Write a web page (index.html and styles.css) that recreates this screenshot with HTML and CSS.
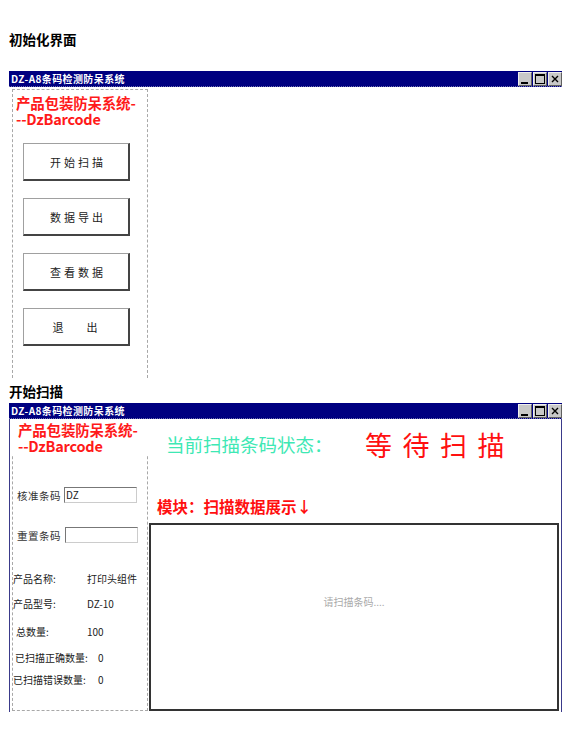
FILE: index.html
```html
<!DOCTYPE html>
<html lang="zh-CN">
<head>
<meta charset="utf-8">
<title>DZ-A8条码检测防呆系统</title>
<link rel="stylesheet" href="styles.css">
</head>
<body>
<div class="page">
  <h2 class="heading h-first">初始化界面</h2>
  <div class="window">
    <div class="titlebar">
      <span class="tb-title">DZ-A8条码检测防呆系统</span>
      <div class="tb-btns">
        <span class="tb-btn"><svg width="12" height="12" viewBox="0 0 12 12"><rect x="2" y="9" width="7" height="2" fill="#000"/></svg></span>
        <span class="tb-btn"><svg width="12" height="12" viewBox="0 0 12 12"><rect x="1.5" y="1.5" width="9" height="9" fill="none" stroke="#000"/><rect x="1" y="1" width="10" height="2" fill="#000"/></svg></span>
        <span class="tb-btn"><svg width="12" height="12" viewBox="0 0 12 12"><path d="M3 3 L9 9 M9 3 L3 9" stroke="#000" stroke-width="1.4"/></svg></span>
      </div>
    </div>
    <div class="body body-one">
      <div class="panel panel-one">
        <div class="brand"><div class="brand-line">产品包装防呆系统-</div><div class="brand-line">--DzBarcode</div></div>
        <div class="menu">
          <button class="menu-btn">开始扫描</button>
          <button class="menu-btn">数据导出</button>
          <button class="menu-btn">查看数据</button>
          <button class="menu-btn wide">退&nbsp;&nbsp;出</button>
        </div>
      </div>
    </div>
  </div>

  <h2 class="heading h-second">开始扫描</h2>
  <div class="window">
    <div class="titlebar">
      <span class="tb-title">DZ-A8条码检测防呆系统</span>
      <div class="tb-btns">
        <span class="tb-btn"><svg width="12" height="12" viewBox="0 0 12 12"><rect x="2" y="9" width="7" height="2" fill="#000"/></svg></span>
        <span class="tb-btn"><svg width="12" height="12" viewBox="0 0 12 12"><rect x="1.5" y="1.5" width="9" height="9" fill="none" stroke="#000"/><rect x="1" y="1" width="10" height="2" fill="#000"/></svg></span>
        <span class="tb-btn"><svg width="12" height="12" viewBox="0 0 12 12"><path d="M3 3 L9 9 M9 3 L3 9" stroke="#000" stroke-width="1.4"/></svg></span>
      </div>
    </div>
    <div class="body body-two">
      <div class="panel panel-two">
        <div class="brand brand-cover"><div class="brand-line">产品包装防呆系统-</div><div class="brand-line">--DzBarcode</div></div>
        <div class="field f1"><span class="f-label">核准条码</span><span class="f-input">DZ</span></div>
        <div class="field f2"><span class="f-label">重置条码</span><span class="f-input"></span></div>
        <div class="info">
          <div class="row r1"><span class="k">产品名称:</span><span class="v">打印头组件</span></div>
          <div class="row r2"><span class="k">产品型号:</span><span class="v">DZ-10</span></div>
          <div class="row r3"><span class="k">总数量:</span><span class="v">100</span></div>
          <div class="row r4"><span class="k">已扫描正确数量:</span><span class="v">0</span></div>
          <div class="row r5"><span class="k">已扫描错误数量:</span><span class="v">0</span></div>
        </div>
      </div>
      <div class="main">
        <div class="status"><span class="status-label">当前扫描条码状态：</span><span class="status-value">等待扫描</span></div>
        <div class="module">模块：扫描数据展示↓</div>
        <div class="display"><span class="placeholder">请扫描条码....</span></div>
      </div>
    </div>
  </div>
</div>
</body>
</html>
```
FILE: styles.css
```css
html, body {
  margin: 0;
  padding: 0;
  background: #fff;
}
body {
  font-family: "Noto Sans CJK SC", "Noto Sans", sans-serif;
  color: #000;
}
.page {
  padding: 0 6px 0 9px;
}
.heading {
  font-size: 13.5px;
  line-height: 16px;
  font-weight: bold;
  margin: 0;
  height: 16px;
}
.h-first {
  padding-top: 31px;
  margin-bottom: 24px;
}
.h-second {
  margin-top: 3px;
  margin-bottom: 4px;
}
.window {
  width: 553px;
}
.titlebar {
  height: 16px;
  background: #000080;
  display: flex;
  align-items: center;
  justify-content: space-between;
  border-bottom: 1px dotted #7070b0;
  box-sizing: border-box;
}
.tb-title {
  color: #fff;
  font-size: 10px;
  font-weight: bold;
  line-height: 14px;
  padding-left: 2px;
  letter-spacing: 0.4px;
}
.tb-btns {
  display: flex;
  gap: 1px;
  align-self: stretch;
  padding-top: 1px;
}
.tb-btn {
  width: 14px;
  height: 14px;
  box-sizing: border-box;
  background: #c8c8c8;
  border-top: 1px solid #eee;
  border-left: 1px solid #eee;
  border-right: 1px solid #606060;
  border-bottom: 1px solid #606060;
  display: flex;
  align-items: center;
  justify-content: center;
}
.body {
  box-sizing: border-box;
}
.body-one {
  height: 291px;
}
.body-two {
  height: 293px;
  border-left: 1px solid #3a3a8a;
  border-right: 1px solid #3a3a8a;
  display: flex;
}
.panel {
  box-sizing: border-box;
  border: 1px dashed #a8a8a8;
  width: 136px;
}
.panel-one {
  margin-left: 3px;
  margin-top: 2px;
  height: 289px;
  border-bottom: none;
}
.brand {
  color: #ff1a1a;
  font-size: 14.5px;
  font-weight: bold;
  padding: 5px 0 0 3px;
  letter-spacing: -0.2px;
}
.brand-line {
  height: 16px;
  line-height: 16px;
  white-space: nowrap;
}
.menu {
  display: flex;
  flex-direction: column;
  gap: 17px;
  margin-top: 16px;
  margin-left: 10px;
}
.menu-btn {
  width: 107px;
  height: 38px;
  box-sizing: border-box;
  background: #fff;
  border-top: 1px solid #a0a0a0;
  border-left: 1px solid #a0a0a0;
  border-right: 2px solid #444;
  border-bottom: 2px solid #444;
  font-family: "Noto Sans CJK SC", sans-serif;
  font-size: 11px;
  letter-spacing: 3px;
  color: #222;
  padding: 0 0 0 4px;
}
.menu-btn.wide {
  letter-spacing: 6px;
}
.panel-two {
  margin-left: 2px;
  margin-top: 2px;
  height: 290px;
  flex: none;
}
.brand-cover {
  background: #fff;
  margin: -1px -4px 0 -1px;
  padding: 1px 0 0 6px;
  height: 35px;
  box-sizing: border-box;
  position: relative;
}
.field {
  display: flex;
  align-items: center;
  font-size: 10.5px;
  color: #333;
}
.f1 {
  margin-top: 31px;
  padding-left: 4px;
}
.f2 {
  margin-top: 24px;
  padding-left: 4px;
}
.f-label {
  width: 47px;
  letter-spacing: 0.5px;
}
.f-input {
  width: 73px;
  height: 16px;
  box-sizing: border-box;
  border-top: 1px solid #777;
  border-left: 1px solid #777;
  border-right: 1px solid #ccc;
  border-bottom: 1px solid #ccc;
  font-size: 10px;
  line-height: 14px;
  padding-left: 1px;
  color: #222;
}
.f2 .f-input {
  margin-left: 1px;
}
.info {
  margin-top: 29px;
  font-size: 10px;
  color: #222;
}
.row {
  display: flex;
  height: 14px;
  line-height: 14px;
}
.k {
  width: 74px;
  flex: none;
}
.r1 { padding-left: 0; }
.r2 { margin-top: 11px; }
.r3 { margin-top: 14px; padding-left: 3px; }
.r3 .k { width: 71px; }
.r4 { margin-top: 12px; padding-left: 2px; }
.r4 .k { width: 83px; }
.r5 { margin-top: 8px; }
.r5 .k { width: 85px; }
.main {
  flex: 1;
  display: flex;
  flex-direction: column;
  min-width: 0;
}
.status {
  display: flex;
  align-items: center;
  margin-top: 10px;
  padding-left: 18px;
  height: 30px;
}
.status-label {
  color: #3ee8b4;
  font-size: 18.5px;
  width: 199px;
}
.status-value {
  color: #ff1010;
  font-size: 27px;
  letter-spacing: 10.5px;
}
.module {
  color: #ff1010;
  font-size: 15.5px;
  font-weight: bold;
  line-height: 18px;
  margin-top: 38px;
  padding-left: 9px;
}
.display {
  margin-top: 8px;
  margin-left: 1px;
  width: 410px;
  flex: 1;
  box-sizing: border-box;
  border: 2px solid #333;
  margin-bottom: 1px;
  display: flex;
  align-items: center;
  justify-content: center;
}
.placeholder {
  color: #aaa;
  font-size: 10px;
  padding-bottom: 32px;
}
```
